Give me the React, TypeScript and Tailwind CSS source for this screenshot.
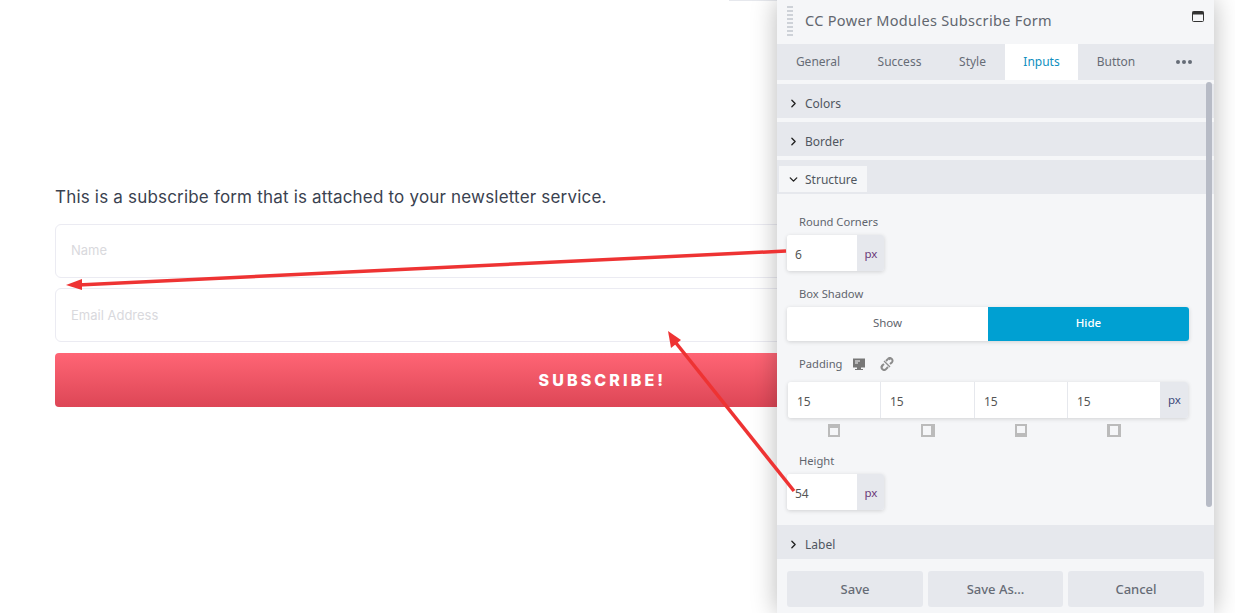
import { ChevronDown, ChevronRight } from "lucide-react";

const tabs = ["General", "Success", "Style", "Inputs", "Button"];

const tabWidths: Record<string, string> = {
  General: "w-[82px]",
  Success: "w-[81px]",
  Style: "w-[65px]",
  Inputs: "w-[73px]",
  Button: "w-[76px]",
};

const Arrows = () => (
  <svg className="absolute left-0 top-0 z-20 pointer-events-none" width="1235" height="613" fill="none">
    <line x1="786" y1="251" x2="78" y2="285" stroke="#ee3333" strokeWidth="3.5" />
    <polygon points="66,285 82,279 82,290" fill="#ee3333" />
    <line x1="794" y1="491" x2="676" y2="343" stroke="#ee3333" strokeWidth="3.5" />
    <polygon points="668,331 681,340 671,348" fill="#ee3333" />
  </svg>
);

const Section = ({ title }: { title: string }) => (
  <div className="h-[34px] bg-[#e6e8ed] flex items-center pl-[10px] pt-[5px] text-[#50565f] text-[12px]">
    <ChevronRight size={13} strokeWidth={2.5} className="text-[#222] mr-[5px] -mt-[1px]" />
    {title}
  </div>
);

const UnitInput = ({ value }: { value: string }) => (
  <div className="w-[97px] h-9 flex rounded-[3px] overflow-hidden shadow-[0_1px_4px_rgba(0,0,0,0.15)] ml-[10px]">
    <div className="w-[70px] bg-white flex items-center pl-2 pt-1 text-[12px] text-[#555]">{value}</div>
    <div className="flex-1 bg-[#e6e8ed] flex items-center justify-center pl-[1px] pt-[2px] text-[11.5px] text-[#6b3a7a]">px</div>
  </div>
);

const SideIcon = ({ side }: { side: "top" | "right" | "bottom" | "left" }) => {
  const wide = side === "left" || side === "right";
  return (
    <svg width={wide ? 14 : 12} height="13" viewBox={wide ? "0 0 14 13" : "0 0 12 13"}>
      <rect x="0" y="0" width={wide ? 14 : 12} height="13" fill="#bbb" />
      {side === "top" && <rect x="2" y="4" width="8" height="7" fill="#f5f6f8" />}
      {side === "right" && <rect x="2" y="2" width="8" height="9" fill="#f5f6f8" />}
      {side === "bottom" && <rect x="2" y="2" width="8" height="7" fill="#f5f6f8" />}
      {side === "left" && <rect x="3" y="2" width="8" height="9" fill="#f5f6f8" />}
    </svg>
  );
};

const Panel = () => (
  <div className="absolute left-[777px] top-0 z-10 w-[437px] h-[613px] flex flex-col bg-[#f5f6f8] shadow-[0_0_24px_rgba(0,0,0,0.28)] font-['Noto_Sans',sans-serif]">
    <div className="h-11 relative flex items-center pl-7 pb-[2px] text-[14.5px] tracking-[0.32px] text-[#62676f]">
      <div className="absolute left-[10px] top-[6px] w-[6px] h-[30px] bg-[repeating-linear-gradient(#ced2d8_0px,#ced2d8_2px,transparent_2px,transparent_4px)]" />
      CC Power Modules Subscribe Form
      <svg className="absolute left-[415px] top-[11px]" width="12" height="11" viewBox="0 0 12 11">
        <rect x="0.5" y="0.5" width="11" height="10" rx="1" fill="none" stroke="#333" />
        <rect x="0.5" y="0.5" width="11" height="3" fill="#333" />
      </svg>
    </div>
    <div className="h-9 bg-[#e6e8ed] flex items-center text-[12px] text-[#666c76]">
      {tabs.map((t) => (
        <div
          key={t}
          className={`${tabWidths[t]} h-full flex items-center justify-center ${t === "Inputs" ? "bg-white text-[#0e8fc0]" : ""}`}
        >
          {t}
        </div>
      ))}
      <div className="ml-[22px] flex gap-[2px]">
        <span className="w-[4px] h-[4px] rounded-full bg-[#666c76]" />
        <span className="w-[4px] h-[4px] rounded-full bg-[#666c76]" />
        <span className="w-[4px] h-[4px] rounded-full bg-[#666c76]" />
      </div>
    </div>

    <div className="relative flex-1 flex flex-col pt-1 gap-1 overflow-hidden">
      <div className="absolute right-[2px] top-[2px] w-[6px] h-[425px] rounded-[3px] bg-[#b7bbc6]" />
      <Section title="Colors" />
      <Section title="Border" />
      <div className="h-[34px] bg-[#e6e8ed] flex">
        <div className="ml-[2px] mt-[6px] w-[88px] h-[26px] bg-[#f5f6f8] flex items-center pl-[8px] pt-[1px] text-[12px] text-[#50565f]">
          <ChevronDown size={13} strokeWidth={2.5} className="text-[#222] mr-[5px] -mt-[1px]" />
          Structure
        </div>
      </div>

      <div className="-mt-1 flex-1 flex flex-col pt-[20px]">
        <div className="pl-[22px] h-[16px] flex items-center text-[11.2px] text-[#5f656d]">Round Corners</div>
        <div className="mt-[5px]"><UnitInput value="6" /></div>

        <div className="mt-[15px] pl-[22px] h-[16px] flex items-center text-[11.2px] text-[#5f656d]">Box Shadow</div>
        <div className="mt-[5px] ml-[10px] w-[402px] h-[34px] flex rounded-[3px] overflow-hidden shadow-[0_1px_4px_rgba(0,0,0,0.15)] text-[11.5px]">
          <div className="flex-1 bg-white flex items-center justify-center pb-[2px] text-[#5f656d]">Show</div>
          <div className="flex-1 bg-[#00a0d2] flex items-center justify-center pb-[2px] text-white font-medium">Hide</div>
        </div>

        <div className="mt-[15px] pl-[22px] h-[16px] flex items-center text-[11.2px] text-[#5f656d]">
          Padding
          <svg className="ml-[9px]" width="14" height="14" viewBox="0 0 14 14">
            <path d="M1 1.5h12v9H1z M5 10h4v2h2v1H3v-1h2z" fill="#777" />
            <path d="M3 3.5h5v1H3z M3 5.5h3v1H3z" fill="#f5f6f8" />
          </svg>
          <svg className="ml-[14px]" width="14" height="14" viewBox="0 0 14 14" fill="none" stroke="#8c8c8c" strokeWidth="2">
            <path d="M6 4l2-2.2a2.3 2.3 0 0 1 3.6 0 2.4 2.4 0 0 1 .4 3.4L10 7" />
            <path d="M8 10l-2 2.2a2.3 2.3 0 0 1-3.6 0 2.4 2.4 0 0 1-.4-3.4L4 7" />
            <path d="M4 4l6 6M9 1l1 2M1 9l2 1" strokeWidth="1.4" />
          </svg>
        </div>
        <div className="mt-[10px] ml-[11px] w-[400px] h-9 flex rounded-[3px] overflow-hidden shadow-[0_1px_4px_rgba(0,0,0,0.15)] text-[12px] text-[#555]">
          {[93, 94, 93, 93].map((w, i) => (
            <div key={i} style={{ width: w }} className="bg-white border-r border-[#e6e8ed] flex items-center pl-[9px] pt-1">15</div>
          ))}
          <div className="flex-1 bg-[#e6e8ed] flex items-center justify-center text-[11.5px] text-[#3e4a7a]">px</div>
        </div>
        <div className="mt-[6px] ml-[11px] w-[400px] h-[14px] flex">
          <div className="w-[93px] flex justify-center pr-[2px]"><SideIcon side="top" /></div>
          <div className="w-[94px] flex justify-center"><SideIcon side="right" /></div>
          <div className="w-[93px] flex justify-center pr-[2px]"><SideIcon side="bottom" /></div>
          <div className="w-[93px] flex justify-center pr-[2px]"><SideIcon side="left" /></div>
        </div>

        <div className="mt-[15px] pl-[22px] h-[16px] flex items-center text-[11.2px] text-[#5f656d]">Height</div>
        <div className="mt-[5px]"><UnitInput value="54" /></div>
      </div>

      <div className="-mt-1"><Section title="Label" /></div>
    </div>

    <div className="h-[54px] flex gap-[5px] pl-[10px] pr-[10px] pt-3 text-[13px] font-medium text-[#666c76]">
      <div className="w-[136px] h-9 bg-[#e6e8ed] rounded-[3px] flex items-center justify-center pt-[1px]">Save</div>
      <div className="w-[135px] h-9 bg-[#e6e8ed] rounded-[3px] flex items-center justify-center pt-[1px]">Save As...</div>
      <div className="w-[136px] h-9 bg-[#e6e8ed] rounded-[3px] flex items-center justify-center pt-[1px]">Cancel</div>
    </div>
  </div>
);

const App = () => {
  return (
    <div className="relative w-[1235px] h-[613px] overflow-hidden bg-white font-['Inter',sans-serif]">
      <div className="ml-[729px] w-[60px] h-px bg-[#e6e8ed]" />
      <main className="pl-[55px] pt-[185px] w-[1100px]">
        <p className="h-[22px] leading-[22px] text-[17px] text-[#3a4250] tracking-[0.19px]">
          This is a subscribe form that is attached to your newsletter service.
        </p>
        <div className="mt-[16px] flex flex-col">
          <div className="h-[54px] rounded-[6px] border border-[#ebebf2] flex items-center pl-[15px] text-[13px] text-[#d9d9dd]">Name</div>
          <div className="mt-[10px] h-[54px] rounded-[6px] border border-[#ebebf2] flex items-center pl-[15px] pt-[1px] text-[13px] text-[#d9d9dd]">Email Address</div>
          <button className="mt-[11px] h-[54px] rounded-[4px] bg-gradient-to-b from-[#ff6575] to-[#dd4656] text-white text-[16px] font-extrabold tracking-[3.1px] text-left pl-[483.5px]">
            SUBSCRIBE!
          </button>
        </div>
      </main>
      <Panel />
      <Arrows />
    </div>
  );
};

export default App;
